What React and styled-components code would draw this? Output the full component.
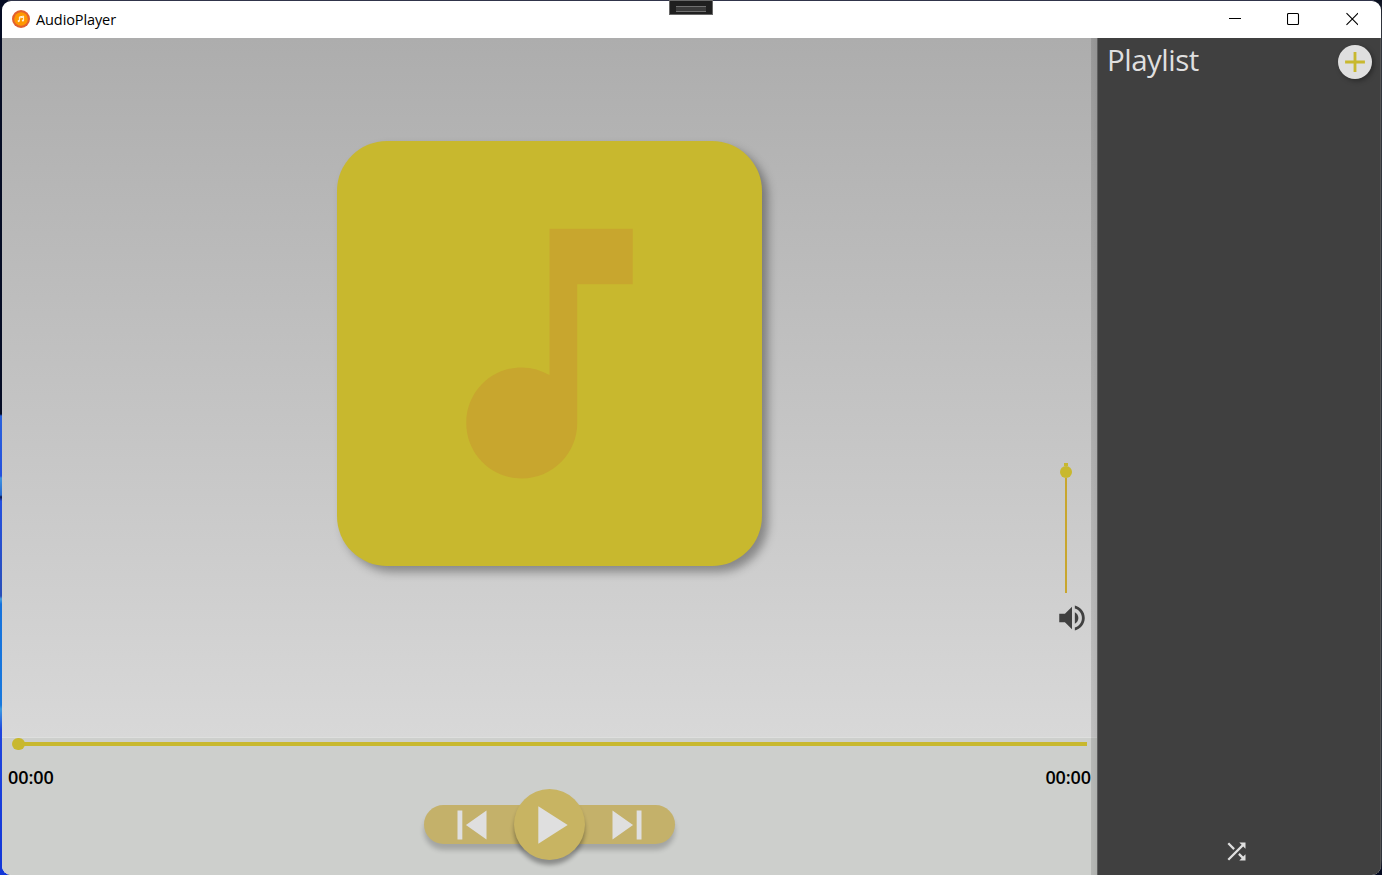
import React from "react";
import styled, { createGlobalStyle } from "styled-components";

const Global = createGlobalStyle`
  * { box-sizing: border-box; }
  body { margin: 0; overflow: hidden; font-family: "Open Sans", "Noto Sans", sans-serif; }
  svg { display: block; flex: none; }
`;

const Desktop = styled.div`
  width: 1382px;
  height: 875px;
  padding: 1px 1px 0 2px;
  position: relative;
  background:
    linear-gradient(180deg, #050c24 0 414px, #2a62dc 416px, #2450dd 476px, #3d93e0 478px, #2868d0 495px,
      #081850 497px, #2450e0 501px, #2a4fb8 596px, #46a0e0 599px, #1672dc 604px, #1878dd 705px,
      #3a9ae0 709px, #1f45dd 730px, #1237d8 875px) 0 0 / 8px 100% no-repeat,
    linear-gradient(#30344a, #30344a) 8px 0 / 1366px 1px no-repeat,
    linear-gradient(180deg, #0a1020, #30343c 20px, #30343c 860px, #040a20 870px);
`;

const Window = styled.div`
  height: 874px;
  display: flex;
  flex-direction: column;
  border-radius: 9px;
  overflow: hidden;
  background: #fff;
`;

const TitleBar = styled.header`
  height: 37px;
  flex: none;
  display: flex;
  align-items: center;
  padding: 0 23px 1px 10px;
`;

const Title = styled.span`
  margin-left: 6px;
  padding-top: 1px;
  flex: 1;
  font-size: 14.5px;
  line-height: 20px;
  letter-spacing: ${(p) => p.$tracking}px;
  color: #000;
`;

const WindowButtons = styled.div`
  display: flex;
  gap: 46px;
`;

const DebugHandle = styled.div`
  position: absolute;
  left: 669px;
  top: 0;
  width: 44px;
  height: 15px;
  padding: 5px 6px;
  background: #1f1f1f;
  border: 1px solid #686868;
  &::before {
    content: "";
    display: block;
    height: 4px;
    background: #3a3a3a;
    border: solid #707070;
    border-width: 1px 0;
  }
`;

const Body = styled.div`
  flex: 1;
  display: flex;
`;

const Player = styled.main`
  width: 1095px;
  flex: none;
  display: flex;
  flex-direction: column;
  position: relative;
  &::after {
    content: "";
    position: absolute;
    inset: 0 -1px 0 auto;
    width: 7px;
    background: linear-gradient(90deg, rgba(0, 0, 0, 0.11) 0, rgba(0, 0, 0, 0.15) 6px, #606060 6px);
  }
`;

const Stage = styled.section`
  height: 699px;
  flex: none;
  display: grid;
  grid-template-columns: 335px 425px 1fr;
  padding-top: 103px;
  background: linear-gradient(#adadad, #d8d8d8);
`;

const Cover = styled.div`
  grid-column: 2;
  width: 425px;
  height: 425px;
  padding: 46px 0 0 46px;
  border-radius: 50px;
  background: #c8b82e;
  box-shadow: 6px 6px 10px rgba(0, 0, 0, 0.34);
`;

const VolumeColumn = styled.div`
  justify-self: end;
  width: 42px;
  padding-top: 322px;
`;

const VolumeSlider = styled.div`
  width: 12px;
  height: 130px;
  margin: 0 0 8px 5px;
  display: flex;
  flex-direction: column;
  align-items: center;
`;

const SliderTip = styled.div`
  width: 4px;
  height: 3px;
  background: #c8b82e;
`;

const Thumb = styled.div`
  width: ${(p) => p.$size}px;
  height: ${(p) => p.$size}px;
  flex: none;
  border-radius: 50%;
  background: #c8b82e;
`;

const VolumeTrack = styled.div`
  width: 2px;
  flex: 1;
  background: #c8a62e;
`;

const Controls = styled.footer`
  flex: 1;
  border-top: 1px solid #dedfde;
  background: #cdcfcc;
`;

const Progress = styled.div`
  height: 12px;
  margin: 0 10px;
  display: flex;
  align-items: center;
`;

const ProgressTrack = styled.div`
  height: 4px;
  flex: 1;
  margin-left: -1px;
  background: #c8b82e;
`;

const Times = styled.div`
  display: flex;
  justify-content: space-between;
  margin-top: 15px;
  padding: 0 6px;
  font-size: 18px;
  font-weight: 600;
  line-height: 24px;
  letter-spacing: -0.1px;
  color: #000;
`;

const Transport = styled.div`
  width: 251px;
  height: 39px;
  margin: 16px 0 0 422px;
  padding: 0 19px;
  display: flex;
  align-items: center;
  justify-content: space-between;
  border-radius: 20px;
  background: #c4b16a;
  box-shadow: 0 6px 5px rgba(0, 0, 0, 0.2);
`;

const PlayButton = styled.div`
  width: 71px;
  height: 71px;
  flex: none;
  display: grid;
  place-items: center;
  padding-right: 2px;
  border-radius: 50%;
  background: #c8b462;
  box-shadow: 0 5px 4px rgba(0, 0, 0, 0.32);
`;

const Sidebar = styled.aside`
  flex: 1;
  display: flex;
  flex-direction: column;
  justify-content: space-between;
  background: #404040;
  border-right: 1px solid #555;
`;

const SidebarHeader = styled.div`
  display: flex;
  justify-content: space-between;
  padding: 7px 8px 0 10px;
`;

const Heading = styled.h1`
  margin: -5px 0 0;
  font-size: 29.5px;
  font-weight: 400;
  line-height: 40px;
  letter-spacing: -0.5px;
  color: #dfdfdf;
`;

const AddButton = styled.div`
  width: 34px;
  height: 34px;
  display: grid;
  place-items: center;
  border-radius: 50%;
  background: #dfdfdf;
  box-shadow: 2px 2px 5px rgba(0, 0, 0, 0.35);
`;

const SidebarFooter = styled.div`
  padding: 0 0 10px 126px;
`;

const paths = {
  note: "M12 3v10.55c-.59-.34-1.27-.55-2-.55-2.21 0-4 1.79-4 4s1.79 4 4 4 4-1.79 4-4V7h4V3z",
  play: "M8 5v14l11-7z",
  previous: "M6 6h2v12H6zm3.5 6l8.5 6V6z",
  next: "M6 18l8.5-6L6 6v12zM16 6v12h2V6z",
  volume: "M3 9v6h4l5 5V4L7 9H3zm13.5 3c0-1.77-1.02-3.29-2.5-4.03v8.05c1.48-.73 2.5-2.25 2.5-4.02zM14 3.23v2.06c2.89.86 5 3.54 5 6.71s-2.11 5.85-5 6.71v2.06c4.01-.91 7-4.49 7-8.77s-2.99-7.86-7-8.77z",
  add: "M19 13h-6v6h-2v-6H5v-2h6V5h2v6h6z",
  shuffle: "M10.59 9.17L5.41 4 4 5.41l5.17 5.17zM14.5 4l2.04 2.04L4 18.59 5.41 20 17.96 7.46 20 9.5V4zm.33 9.41l-1.41 1.41 3.13 3.13L14.5 20H20v-5.5l-2.04 2.04z",
};

function Icon({ name, size, color = "#dfdfdf" }) {
  return (
    <svg width={size} height={size} viewBox="0 0 24 24" fill={color}>
      <path d={paths[name]} />
    </svg>
  );
}

function AppLogo() {
  return (
    <svg width="18" height="18" viewBox="0 0 18 18">
      <circle cx="9" cy="9" r="9" fill="#e2602f" />
      <circle cx="9" cy="9" r="6.8" fill="#ff9800" />
      <path d="M7.4 11V6.9l4.2-.8v4.3M7.4 8l4.2-.8" fill="none" stroke="#fff3dc" strokeWidth="1" />
      <circle cx="6.7" cy="11.1" r="1.1" fill="#fff3dc" />
      <circle cx="10.9" cy="10.5" r="1.1" fill="#fff3dc" />
    </svg>
  );
}

function CaptionIcon({ children }) {
  return (
    <svg width="12.5" height="14" viewBox="0 0 12.5 14" fill="none" stroke="#000" strokeWidth="1.1">
      {children}
    </svg>
  );
}

export default function App() {
  return (
    <Desktop>
      <Global />
      <Window>
        <TitleBar>
          <AppLogo />
          <Title $tracking={-0.1}>AudioPlayer</Title>
          <WindowButtons>
            <CaptionIcon><path d="M0 6.5h12" /></CaptionIcon>
            <CaptionIcon><rect x=".5" y="1.5" width="11" height="11" rx="1" /></CaptionIcon>
            <CaptionIcon><path d="M.5 1.2l11.6 11.6M12.1 1.2L.5 12.8" /></CaptionIcon>
          </WindowButtons>
        </TitleBar>
        <Body>
          <Player>
            <Stage>
              <Cover><Icon name="note" size={333} color="#c8a62e" /></Cover>
              <VolumeColumn>
                <VolumeSlider>
                  <SliderTip />
                  <Thumb $size={12} />
                  <VolumeTrack />
                </VolumeSlider>
                <Icon name="volume" size={34} color="#404040" />
              </VolumeColumn>
            </Stage>
            <Controls>
              <Progress>
                <Thumb $size={12.5} />
                <ProgressTrack />
              </Progress>
              <Times>
                <span>00:00</span>
                <span>00:00</span>
              </Times>
              <Transport>
                <Icon name="previous" size={58} />
                <PlayButton><Icon name="play" size={64} /></PlayButton>
                <Icon name="next" size={58} />
              </Transport>
            </Controls>
          </Player>
          <Sidebar>
            <SidebarHeader>
              <Heading>Playlist</Heading>
              <AddButton><Icon name="add" size={34} color="#c8b82e" /></AddButton>
            </SidebarHeader>
            <SidebarFooter><Icon name="shuffle" size={27} /></SidebarFooter>
          </Sidebar>
        </Body>
      </Window>
      <DebugHandle />
    </Desktop>
  );
}
